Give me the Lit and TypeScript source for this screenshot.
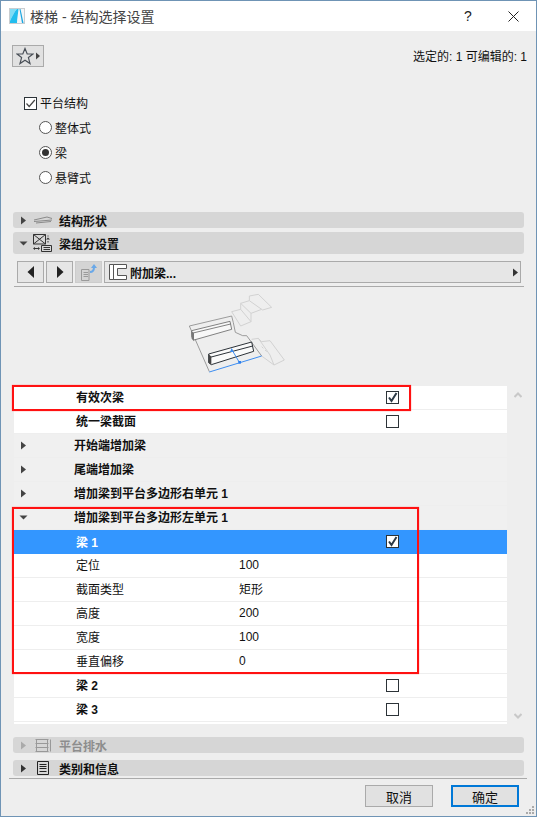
import { LitElement, html, css, svg } from "lit";
import { customElement } from "lit/decorators.js";

type Row = { t: string; kind: "check" | "group" | "value"; bold?: boolean; on?: boolean; open?: boolean; sel?: boolean; v?: string };
const rows: Row[] = [
  { t: "有效次梁", kind: "check", on: true, bold: true },
  { t: "统一梁截面", kind: "check", bold: true },
  { t: "开始端增加梁", kind: "group" },
  { t: "尾端增加梁", kind: "group" },
  { t: "增加梁到平台多边形右单元 1", kind: "group" },
  { t: "增加梁到平台多边形左单元 1", kind: "group", open: true },
  { t: "梁 1", kind: "check", on: true, sel: true, bold: true },
  { t: "定位", kind: "value", v: "100" },
  { t: "截面类型", kind: "value", v: "矩形" },
  { t: "高度", kind: "value", v: "200" },
  { t: "宽度", kind: "value", v: "100" },
  { t: "垂直偏移", kind: "value", v: "0" },
  { t: "梁 2", kind: "check", bold: true },
  { t: "梁 3", kind: "check", bold: true },
];

const tri = (dir: "r" | "d" | "l", color = "#444") => html`<svg class="tri" width="9" height="9" viewBox="0 0 9 9">
  <path fill=${color} d=${dir === "r" ? "M2 0.5L7 4.5L2 8.5Z" : dir === "d" ? "M0.5 2.5H8.5L4.5 6.5Z" : "M7 0.5L2 4.5L7 8.5Z"} /></svg>`;

const bigTri = (left: boolean) => html`<svg width="8" height="12" viewBox="0 0 8 12"><path fill="#222" d=${left ? "M7 0V12L0.5 6Z" : "M1 0V12L7.5 6Z"} /></svg>`;

const illustration = svg`
  <g fill="none" stroke="#d2d2d2" stroke-width="3">
    <path d="M245 95L272 88L272 70L298 62L298 48L325 43L365 82L338 90L335 88L303 100L303 125L272 138Z" />
    <path d="M272 88L303 125M298 62L335 88M272 70L303 100" />
    <path d="M305 178L325 175L335 185L360 182L403 240L372 255L335 228M325 175L360 225L372 255M345 210L350 215M335 200L340 205" />
  </g>
  <path fill="none" stroke="#8a8a8a" stroke-width="2.5" d="M178 275L118 138L245 108L250 128L256 157L278 167L290 167L335 228" />
  <path fill="#f8f8f8" stroke="#6a6a6a" stroke-width="2.5" d="M125 152L240 124L245 148L132 180L125 170Z" />
  <path fill="none" stroke="#6a6a6a" stroke-width="2.5" d="M125 160L242 132" />
  <path fill="#777" d="M124 152L132 160L132 184L125 176Z" />
  <path fill="#fafafa" stroke="#2c3238" stroke-width="3" d="M176 222L305 186L311 214L184 254L176 248Z" />
  <path fill="none" stroke="#2c3238" stroke-width="3" d="M180 232L308 198" />
  <path fill="#444" d="M176 222L184 230L184 254L176 248Z" />
  <path fill="none" stroke="#3d8df0" stroke-width="3" d="M178 276L335 228M268 247L245 208" />
  <path fill="#3d8df0" d="M245 204L251 216L240 216Z" /><rect x="265" y="243" width="8" height="8" fill="#2f80ed" />
`;

@customElement("app-root")
export class AppRoot extends LitElement {
  static styles = css`
    :host { display: block; width: 537px; height: 817px; box-sizing: border-box; border: 1px solid #6f94b5; background: #eee; position: relative; overflow: hidden;
      font: 12px "Liberation Sans", "Noto Sans CJK SC", sans-serif; color: #111; }
    svg { display: block; flex: none; }
    .title { height: 30px; background: #fff; display: flex; align-items: center; padding-left: 8px; color: #444; font-size: 14px; }
    .title .name { margin-left: 5px; }
    .title .help { margin-left: auto; font-size: 14px; color: #222; width: 16px; text-align: center; }
    .title .x { margin: 0 17px 0 32px; }
    .body { padding: 14px 12px 0 11px; }
    .top { display: flex; justify-content: space-between; align-items: center; height: 22px; }
    .star { width: 32px; height: 22px; box-sizing: border-box; border: 1px solid #aaa; background: #e1e1e1; display: flex; align-items: center; padding-left: 3px; gap: 1px; }
    .count { margin-top: -1px; margin-right: -3px; font-size: 12px; white-space: nowrap; }
    .opts { padding: 24px 0 0 12px; height: 145px; box-sizing: border-box; }
    .opt { display: flex; align-items: center; height: 25px; gap: 3px; }
    .opt.main { height: 24px; }
    .opt.sub { padding-left: 15px; }
    .opt span.lbl { margin-top: -1px; }
    .box { width: 13px; height: 13px; box-sizing: border-box; border: 1px solid #2c3338; background: #fff; flex: none; display: flex; align-items: center; justify-content: center; }
    .radio { width: 13px; height: 13px; box-sizing: border-box; border: 1px solid #555; background: #fff; border-radius: 50%; display: flex; align-items: center; justify-content: center; flex: none; }
    .radio i { width: 7px; height: 7px; border-radius: 50%; background: #333; display: block; }
    .sec { margin-left: 1px; width: 511px; background: #d6d6d6; border-radius: 3px; height: 16px; display: flex; align-items: center; font-weight: 700; padding-left: 6px; box-sizing: border-box; }
    .sec .tri { margin-right: 2px; }
    .sec .ic { width: 25px; display: flex; justify-content: center; margin-right: 4px; }
    .sec.tall { height: 22px; margin-top: 4px; }
    .sec.dim { color: #8d8d8d; }
    .sec.first { margin-top: 0; }
    .tools { display: flex; gap: 2px; padding: 7px 0 0 5px; height: 22px; }
    .tb { width: 27px; height: 22px; box-sizing: border-box; border: 1px solid #aaa; background: #e6e6e6; display: flex; align-items: center; justify-content: center; }
    .tb.dis { background: #d4d4d4; border-color: #ccc; }
    .dd { flex: none; width: 417px; height: 22px; box-sizing: border-box; border: 1px solid #aaa; background: #e6e6e6; display: flex; align-items: center; padding: 0 0 0 4px; font-weight: 700; gap: 3px; }
    .dd .tri { margin-left: auto; }
    .rule { height: 1px; background: #aaa; margin: 3px 0 0 2px; width: 510px; }
    .pic { height: 99px; padding-left: 138px; box-sizing: border-box; }
    .listwrap { display: flex; margin-left: 2px; }
    .list { width: 493px; height: 338px; background: #fff; }
    .row { height: 24px; box-sizing: border-box; display: flex; align-items: center; padding: 0 0 2px 62px; border-bottom: 1px solid #eee; position: relative; }
    .row.group { background: #f0f0f0; padding-left: 60px; font-weight: 700; }
    .row.group .tri { position: absolute; left: 5px; top: 7px; }
    .row.bold { font-weight: 700; }
    .row.sel { background: #3396ff; color: #fff; border-bottom: 0; }
    .row .val { position: absolute; left: 225px; font-weight: 400; }
    .row .box { position: absolute; left: 372px; top: 5px; }
    .sb { flex: 1; display: flex; flex-direction: column; justify-content: space-between; padding: 6px 0 5px 7px; height: 338px; box-sizing: border-box; }
    .bars { padding-top: 13px; }
    .bars .sec + .sec { margin-top: 7px; }
    .rule2 { height: 1px; background: #aaa; margin: 2px 0 0 -3px; width: 518px; }
    .foot { display: flex; justify-content: flex-end; gap: 18px; padding: 6px 5px 0 0; }
    .btn { width: 68px; height: 22px; box-sizing: border-box; border: 1px solid #aaa; background: #e1e1e1; display: flex; align-items: center; justify-content: center; font-size: 13px; }
    .btn.pri { border: 2px solid #0078d7; }
    .mark { position: absolute; border: 2px solid #f11; box-shadow: 0 0 1px #f66; box-sizing: border-box; pointer-events: none; }
    .mark.a { left: 11px; top: 384px; width: 399px; height: 26px; }
    .mark.b { left: 11px; top: 506px; width: 407px; height: 167px; }
    .grip { position: absolute; right: 1px; bottom: 1px; }
  `;

  private check(color = "#2c3a47") {
    return html`<svg width="11" height="11" viewBox="0 0 11 11"><path fill="none" stroke=${color} stroke-width="2" d="M2 5.5L4.5 9L9.5 1" /></svg>`;
  }

  private row(r: Row) {
    const cls = ["row", r.kind === "group" ? "group" : "", r.bold ? "bold" : "", r.sel ? "sel" : ""].join(" ");
    return html`<div class=${cls}>
      ${r.kind === "group" ? tri(r.open ? "d" : "r") : ""}
      <span>${r.t}</span>
      ${r.kind === "check" ? html`<span class="box">${r.on ? this.check() : ""}</span>` : ""}
      ${r.kind === "value" ? html`<span class="val">${r.v}</span>` : ""}
    </div>`;
  }

  render() {
    return html`
      <div class="title">
        <svg width="16" height="16" viewBox="0 0 16 16"><rect x=".5" y=".5" width="15" height="15" fill="#f4f6f8" stroke="#c9cdd0"/><path fill="#7fdcf5" d="M1 13V1H8C5 4 3 9 1 13Z"/><path fill="#22bdee" d="M1 15V13C3 9 5 4 8 1H9.5C9 6 8 11 8 15Z"/><path fill="#1ba6e0" d="M10.5 1H11.5L14.5 15H13Z"/></svg>
        <span class="name">楼梯 - 结构选择设置</span>
        <span class="help">?</span>
        <svg class="x" width="11" height="11" viewBox="0 0 11 11"><path stroke="#222" d="M.5 .5L10.5 10.5M10.5 .5L.5 10.5"/></svg>
      </div>
      <div class="body">
        <div class="top">
          <div class="star">
            <svg width="18" height="18" viewBox="0 0 18 18"><path fill="none" stroke="#4a5058" stroke-width="1.2" d="M9 1.5L11.2 7H17L12.4 10.6L14 16.5L9 13.2L4 16.5L5.6 10.6L1 7H6.8Z"/></svg>
            <svg width="6" height="8" viewBox="0 0 6 8"><path fill="#444" d="M1 0.5L5 4L1 7.5Z"/></svg>
          </div>
          <div class="count">选定的: 1 可编辑的: 1</div>
        </div>
        <div class="opts">
          <div class="opt main"><span class="box"><svg width="11" height="11" viewBox="0 0 11 11"><path fill="none" stroke="#444" stroke-width="1.2" d="M1.5 5.5L4.2 8.5L9.8 2"/></svg></span><span class="lbl">平台结构</span></div>
          <div class="opt sub"><span class="radio"></span><span class="lbl">整体式</span></div>
          <div class="opt sub"><span class="radio"><i></i></span><span class="lbl">梁</span></div>
          <div class="opt sub"><span class="radio"></span><span class="lbl">悬臂式</span></div>
        </div>
        <div class="sec first">${tri("r")}<span class="ic"><svg width="20" height="8" viewBox="0 0 20 8"><path fill="none" stroke="#8a8a8a" d="M1 4L14 1L19 2.5M1 5.5L19 4M3 7L18 5.5"/></svg></span>结构形状</div>
        <div class="sec tall">${tri("d")}<span class="ic"><svg width="19" height="18" viewBox="0 0 19 18"><path fill="none" stroke="#333" d="M.5 .5H12.5V10H.5ZM.5 .5L12.5 10M12.5 .5L.5 10M8.5 11.5H18.5V17.5H8.5ZM10.5 13.5H17M10.5 15.5H17M15 1.5V2.5M15 7V8.5M1 14.5H6"/><path fill="#333" d="M15 3.5L17 5.5H13ZM0 14.5L2 13V16ZM7 14.5L5 13V16Z"/></svg></span>梁组分设置</div>
        <div class="tools">
          <div class="tb">${bigTri(true)}</div>
          <div class="tb">${bigTri(false)}</div>
          <div class="tb dis"><svg width="18" height="17" viewBox="0 0 18 17"><path fill="none" stroke="#9a9a9a" d="M1.5 5.5H9V16.5H1.5ZM3.5 8.5H8M3.5 10.5H8M3.5 12.5H8"/><path fill="none" stroke="#6aa8e8" stroke-width="2" d="M10 8C13 8 14 6 14 3"/><path fill="#6aa8e8" d="M14 0L17 4H11Z"/></svg></div>
          <div class="dd"><svg width="18" height="16" viewBox="0 0 18 16"><path fill="#fff" stroke="#555" d="M.5 .5H4.5V15.5H.5ZM4.5 .5H17.5V4.5H8.5V11.5H17.5V15.5H4.5Z"/></svg>附加梁...${tri("r", "#333")}</div>
        </div>
        <div class="rule"></div>
        <div class="pic"><svg width="150" height="93" viewBox="0 21 450 279">${illustration}</svg></div>
        <div class="listwrap">
          <div class="list">${rows.map((r) => this.row(r))}</div>
          <div class="sb">
            <svg width="8" height="6" viewBox="0 0 8 6"><path fill="none" stroke="#c8c8c8" stroke-width="2" d="M.5 5L4 1.5L7.5 5"/></svg>
            <svg width="8" height="6" viewBox="0 0 8 6"><path fill="none" stroke="#c8c8c8" stroke-width="2" d="M.5 1L4 4.5L7.5 1"/></svg>
          </div>
        </div>
        <div class="bars">
          <div class="sec dim first">${tri("r", "#aaa")}<span class="ic"><svg width="16" height="13" viewBox="0 0 16 13"><path fill="none" stroke="#999" d="M.5 .5H13.5M.5 4.5H13.5M.5 8.5H13.5M.5 12.5H13.5M1.5 .5V12.5M12.5 .5V12.5M15.5 .5V12.5"/></svg></span>平台排水</div>
          <div class="sec first">${tri("r", "#333")}<span class="ic"><svg width="12" height="14" viewBox="0 0 12 14"><path fill="none" stroke="#222" d="M.5 .5H11.5V13.5H.5ZM2.5 3.5H9.5M2.5 5.5H9.5M2.5 7.5H9.5M2.5 10.5H9.5"/></svg></span>类别和信息</div>
        </div>
        <div class="rule2"></div>
        <div class="foot"><div class="btn">取消</div><div class="btn pri">确定</div></div>
      </div>
      <div class="mark a"></div>
      <div class="mark b"></div>
      <svg class="grip" width="9" height="9" viewBox="0 0 9 9"><path fill="#aaa" d="M6 0h2v2h-2zM3 3h2v2h-2zM6 3h2v2h-2zM0 6h2v2h-2zM3 6h2v2h-2zM6 6h2v2h-2z"/></svg>
    `;
  }
}
